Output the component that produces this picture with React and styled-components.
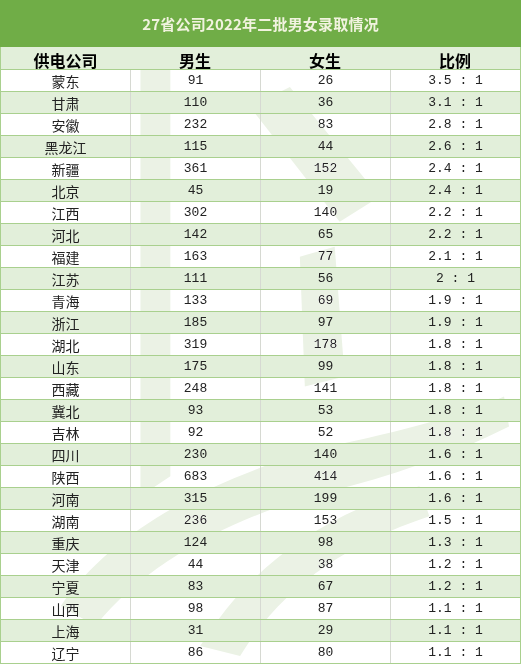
import React from 'react';
import styled, { createGlobalStyle } from 'styled-components';

const GlobalStyle = createGlobalStyle`
    html, body {
        margin: 0;
        padding: 0;
        background: #ffffff;
    }
`;

const rows = [
    ['蒙东', 91, 26, '3.5 : 1'],
    ['甘肃', 110, 36, '3.1 : 1'],
    ['安徽', 232, 83, '2.8 : 1'],
    ['黑龙江', 115, 44, '2.6 : 1'],
    ['新疆', 361, 152, '2.4 : 1'],
    ['北京', 45, 19, '2.4 : 1'],
    ['江西', 302, 140, '2.2 : 1'],
    ['河北', 142, 65, '2.2 : 1'],
    ['福建', 163, 77, '2.1 : 1'],
    ['江苏', 111, 56, '2 : 1'],
    ['青海', 133, 69, '1.9 : 1'],
    ['浙江', 185, 97, '1.9 : 1'],
    ['湖北', 319, 178, '1.8 : 1'],
    ['山东', 175, 99, '1.8 : 1'],
    ['西藏', 248, 141, '1.8 : 1'],
    ['冀北', 93, 53, '1.8 : 1'],
    ['吉林', 92, 52, '1.8 : 1'],
    ['四川', 230, 140, '1.6 : 1'],
    ['陕西', 683, 414, '1.6 : 1'],
    ['河南', 315, 199, '1.6 : 1'],
    ['湖南', 236, 153, '1.5 : 1'],
    ['重庆', 124, 98, '1.3 : 1'],
    ['天津', 44, 38, '1.2 : 1'],
    ['宁夏', 83, 67, '1.2 : 1'],
    ['山西', 98, 87, '1.1 : 1'],
    ['上海', 31, 29, '1.1 : 1'],
    ['辽宁', 86, 80, '1.1 : 1'],
];

const headers = ['供电公司', '男生', '女生', '比例'];

const App = () => {
    return (
        <>
            <GlobalStyle />
            <Sheet>
                <Title>27省公司2022年二批男女录取情况</Title>
                <Body>
                    <HeaderRow>
                        {headers.map((h) => (
                            <HeaderCell key={h}>{h}</HeaderCell>
                        ))}
                    </HeaderRow>
                    {rows.map((row, i) => (
                        <Row key={row[0]} $shaded={i % 2 === 1}>
                            <Cell>{row[0]}</Cell>
                            <Cell $mono>{row[1]}</Cell>
                            <Cell $mono>{row[2]}</Cell>
                            <Cell $mono>{row[3]}</Cell>
                        </Row>
                    ))}
                    {/* faint logo watermark lying over the table */}
                    <Watermark viewBox="0 0 521 618" preserveAspectRatio="none">
                        <polygon points="140,0 170,0 170,430 140,450" />
                        <polygon points="250,60 290,40 380,150 340,175" />
                        <polygon points="300,210 335,200 345,330 305,340" />
                        <path d="M60,560 C120,470 250,420 330,400 C400,385 460,370 505,350 L510,380 C450,410 390,430 330,445 C250,465 150,510 95,580 Z" />
                        <path d="M200,600 C250,520 320,470 420,440 L430,470 C340,500 280,545 240,610 Z" />
                    </Watermark>
                </Body>
            </Sheet>
        </>
    );
};

export default App;

const Sheet = styled.div`
    width: 521px;
    font-family: "Noto Sans CJK SC", sans-serif;
`;

const Title = styled.div`
    height: 47px;
    background: #70ad47;
    color: #f1f3df;
    font-size: 15px;
    font-weight: 700;
    display: flex;
    align-items: center;
    justify-content: center;
    letter-spacing: 0.2px;
`;

const Body = styled.div`
    position: relative;
    border-left: 1px solid #a9d08e;
    border-right: 1px solid #a9d08e;
`;

const Row = styled.div`
    display: grid;
    grid-template-columns: 129px 130px 130px 1fr;
    height: 22px;
    box-sizing: border-box;
    border-bottom: 1px solid #a9d08e;
    background: ${(p) => (p.$shaded ? '#e2efda' : '#ffffff')};
`;

const HeaderRow = styled(Row)`
    height: 23px;
    background: #e2efda;
`;

const Cell = styled.div`
    display: flex;
    align-items: center;
    justify-content: center;
    color: #222222;
    font-family: ${(p) => (p.$mono ? '"Liberation Mono", monospace' : '"Noto Sans CJK SC", sans-serif')};
    font-size: ${(p) => (p.$mono ? '13px' : '14px')};
    line-height: 1;
    white-space: pre;

    & + & {
        border-left: 1px solid #d6d9d2;
    }
`;

const HeaderCell = styled(Cell)`
    padding-top: 3px;
    font-size: 16px;
    font-weight: 700;
    color: #000000;

    & + & {
        border-left: none;
    }
`;

const Watermark = styled.svg`
    position: absolute;
    left: 0;
    top: 0;
    width: 100%;
    height: 100%;
    pointer-events: none;
    mix-blend-mode: darken;
    fill: #ebf2e5;
`;
